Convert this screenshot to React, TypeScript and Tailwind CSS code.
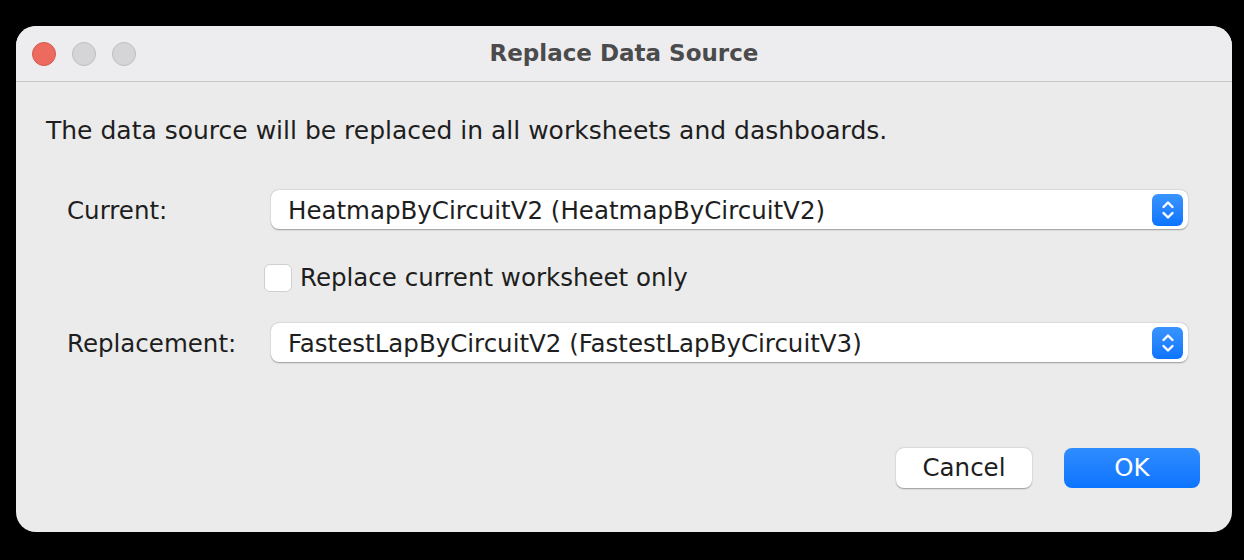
import React from 'react';

const font = { fontFamily: '"DejaVu Sans", "Liberation Sans", sans-serif' };

const Stepper: React.FC = () => (
  <div className="w-[31px] h-[32px] rounded-[6px] bg-gradient-to-b from-[#3a94ff] to-[#0a74ff] flex items-center justify-center">
    <svg width="14" height="22" viewBox="0 0 14 22" fill="none" stroke="white" strokeWidth="2.4" strokeLinecap="round" strokeLinejoin="round">
      <path d="M2.5 8 L7 3.5 L11.5 8" />
      <path d="M2.5 14 L7 18.5 L11.5 14" />
    </svg>
  </div>
);

const Select: React.FC<{ value: string }> = ({ value }) => (
  <div className="flex-1 h-[39px] bg-white rounded-[8px] shadow-[0_0.5px_1.5px_rgba(0,0,0,0.35)] flex items-center justify-between pl-[17px] pr-[5px]">
    <span className="text-[24.5px] leading-[30px] pt-[2px] text-[#1e1e1e]">{value}</span>
    <Stepper />
  </div>
);

const App: React.FC = () => {
  return (
    <div className="w-[1244px] h-[560px] bg-black pt-[26px] pl-[16px]" style={font}>
      <div className="w-[1216px] h-[506px] rounded-[20px] overflow-hidden bg-[#ebebeb] flex flex-col">
        {/* Title bar */}
        <div className="h-[56px] bg-[#ededef] border-b border-[#c8c8c8] flex items-center relative">
          <div className="flex gap-[16px] pl-[16px]">
            <span className="w-[24px] h-[24px] rounded-full bg-[#ed6a5e] border border-[#d5574b]" />
            <span className="w-[24px] h-[24px] rounded-full bg-[#d5d5d7] border border-[#bdbdbf]" />
            <span className="w-[24px] h-[24px] rounded-full bg-[#d5d5d7] border border-[#bdbdbf]" />
          </div>
          <div className="absolute inset-0 flex items-center justify-center pointer-events-none">
            <span className="text-[23px] font-bold text-[#4b4b4b]">Replace Data Source</span>
          </div>
        </div>

        {/* Body */}
        <div className="flex-1 flex flex-col pl-[30px] pr-[32px]">
          <p className="mt-[34px] text-[25px] text-[#1e1e1e] leading-[30px]">
            The data source will be replaced in all worksheets and dashboards.
          </p>

          <div className="mt-[44px] flex items-center pr-[12px]">
            <span className="w-[225px] pl-[21px] pt-[2px] text-[24.5px] leading-[30px] text-[#1e1e1e]">Current:</span>
            <Select value="HeatmapByCircuitV2 (HeatmapByCircuitV2)" />
          </div>

          <div className="mt-[35px] flex items-center pl-[218px] gap-[8px]">
            <span className="w-[28px] h-[28px] rounded-[6px] bg-white border border-[#cfcfcf]" />
            <span className="text-[24.5px] leading-[28px] text-[#1e1e1e]">Replace current worksheet only</span>
          </div>

          <div className="mt-[31px] flex items-center pr-[12px]">
            <span className="w-[225px] pl-[21px] pt-[2px] text-[24.5px] leading-[30px] text-[#1e1e1e]">Replacement:</span>
            <Select value="FastestLapByCircuitV2 (FastestLapByCircuitV3)" />
          </div>

          <div className="mt-[86px] flex justify-end gap-[32px]">
            <button className="w-[136px] h-[40px] rounded-[8px] bg-white shadow-[0_0.5px_1.5px_rgba(0,0,0,0.35)] text-[24.5px] leading-[30px] text-[#1e1e1e]">
              Cancel
            </button>
            <button className="w-[136px] h-[40px] rounded-[8px] bg-gradient-to-b from-[#2f8cff] to-[#0a74ff] text-[24.5px] leading-[30px] text-white">
              OK
            </button>
          </div>
        </div>
      </div>
    </div>
  );
};

export default App;
